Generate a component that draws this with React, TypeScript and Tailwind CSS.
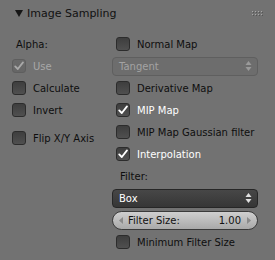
import type { ReactNode } from 'react'

function Check({ on, dim }: { on?: boolean; dim?: boolean }) {
  return (
    <span
      className={`flex h-[14px] w-[14px] shrink-0 items-center justify-center rounded-[3px] border ${
        dim
          ? 'border-[#5e5e5e] bg-gradient-to-b from-[#6a6a6a] to-[#666666]'
          : 'border-[#2c2c2c] bg-gradient-to-b from-[#3e3e3e] to-[#505050]'
      }`}
    >
      {on && (
        <svg width="12" height="12" viewBox="0 0 12 12">
          <path
            d="M2.2 6.4 L4.8 9 L10 2.4"
            fill="none"
            stroke={dim ? '#a9a9a9' : '#ffffff'}
            strokeWidth="1.8"
            strokeLinecap="round"
            strokeLinejoin="round"
          />
        </svg>
      )}
    </span>
  )
}

function CheckRow({ label, on, dim }: { label: string; on?: boolean; dim?: boolean }) {
  const color = dim ? 'text-[#a8a8a8]' : on ? 'text-white' : 'text-[#0e0e0e]'
  return (
    <div className="flex h-[22px] items-center pl-[4px]">
      <Check on={on} dim={dim} />
      <span className={`ml-[7px] ${color}`}>{label}</span>
    </div>
  )
}

function UpDown({ color }: { color: string }) {
  return (
    <svg width="7" height="12" viewBox="0 0 7 12">
      <path d="M3.5 1 L6.5 5 L0.5 5 Z" fill={color} />
      <path d="M3.5 11 L6.5 7 L0.5 7 Z" fill={color} />
    </svg>
  )
}

function Row({ children }: { children: ReactNode }) {
  return <div className="flex h-[22px] items-center">{children}</div>
}

export default function App() {
  return (
    <div
      className="h-[260px] w-[275px] overflow-hidden bg-[#727272] text-[10px]"
      style={{ fontFamily: '"DejaVu Sans", sans-serif' }}
    >
      {/* header */}
      <div className="flex h-[28px] items-center pl-[15px] pr-[12px]">
        <svg width="8" height="7" viewBox="0 0 8 7" className="mb-[2px]">
          <path d="M0 0 L8 0 L4 7 Z" fill="#161616" />
        </svg>
        <span className="ml-[4px] text-[11px] text-[#111]">Image Sampling</span>
        <div className="flex-1" />
        <svg width="11" height="5" viewBox="0 0 11 5" className="mb-[2px]">
          {[0, 3, 6, 9].map((x) =>
            [0, 3].map((y) => (
              <g key={`${x}-${y}`}>
                <rect x={x + 1} y={y + 1} width="1" height="1" fill="#555" />
                <rect x={x} y={y} width="1" height="1" fill="#a8a8a8" />
              </g>
            ))
          )}
        </svg>
      </div>

      <div className="flex pt-[5px]">
        {/* left column */}
        <div className="w-[112px] pl-[8px]">
          <Row>
            <span className="pl-[8px] text-[#0e0e0e]">Alpha:</span>
          </Row>
          <CheckRow label="Use" on dim />
          <CheckRow label="Calculate" />
          <CheckRow label="Invert" />
          <div className="h-[6px]" />
          <CheckRow label="Flip X/Y Axis" />
        </div>

        {/* right column */}
        <div className="w-[146px]">
          <CheckRow label="Normal Map" />
          <Row>
            <div className="flex h-[19px] w-full items-center justify-between rounded-[4px] border border-[#5f5f5f] bg-[#6d6d6d] pl-[6px] pr-[5px] text-[#a3a3a3]">
              <span>Tangent</span>
              <UpDown color="#9a9a9a" />
            </div>
          </Row>
          <CheckRow label="Derivative Map" />
          <CheckRow label="MIP Map" on />
          <CheckRow label="MIP Map Gaussian filter" />
          <CheckRow label="Interpolation" on />
          <Row>
            <span className="pl-[8px] text-[#0e0e0e]">Filter:</span>
          </Row>
          <Row>
            <div className="flex h-[19px] w-full items-center justify-between rounded-[4px] border border-[#262626] bg-gradient-to-b from-[#474747] to-[#363636] pl-[6px] pr-[5px] text-white">
              <span>Box</span>
              <UpDown color="#e0e0e0" />
            </div>
          </Row>
          <Row>
            <div className="flex h-[19px] w-full items-center rounded-full border border-[#3a3a3a] bg-gradient-to-b from-[#cfcfcf] to-[#a9a9a9] pl-[6px] pr-[6px] text-[#111]">
              <svg width="4" height="7" viewBox="0 0 4 7">
                <path d="M4 0 L4 7 L0 3.5 Z" fill="#8a8a8a" />
              </svg>
              <span className="ml-[5px]">Filter Size:</span>
              <span className="ml-auto">1.00</span>
              <svg width="4" height="7" viewBox="0 0 4 7" className="ml-[6px]">
                <path d="M0 0 L0 7 L4 3.5 Z" fill="#8a8a8a" />
              </svg>
            </div>
          </Row>
          <CheckRow label="Minimum Filter Size" />
        </div>
      </div>
    </div>
  )
}
